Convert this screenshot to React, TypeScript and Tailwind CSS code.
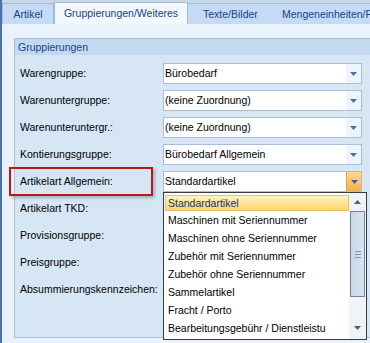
import React from "react";

const font = { fontFamily: '"Liberation Sans", Arial, sans-serif' };

function Arrow({ color = "#4d6fa8" }: { color?: string }) {
  return (
    <svg width="7" height="4" viewBox="0 0 7 4">
      <polygon points="0,0 7,0 3.5,4" fill={color} />
    </svg>
  );
}

function Combo({ value, open }: { value: string; open?: boolean }) {
  return (
    <div className="flex h-[21px] w-[199px] items-stretch border border-[#a7bfd8] bg-white">
      <div className="flex flex-1 items-center pl-[1px] text-black">{value}</div>
      {open ? (
        <div className="flex w-[15px] items-center justify-center border-l border-[#e3a54b] bg-gradient-to-b from-[#ffd98a] to-[#f6b04a]">
          <Arrow color="#3c5fa0" />
        </div>
      ) : (
        <div className="flex w-[15px] items-center justify-center bg-[#edf4fc]">
          <Arrow />
        </div>
      )}
    </div>
  );
}

const rows: { label: string; value?: string; open?: boolean }[] = [
  { label: "Warengruppe:", value: "Bürobedarf" },
  { label: "Warenuntergruppe:", value: "(keine Zuordnung)" },
  { label: "Warenunteruntergr.:", value: "(keine Zuordnung)" },
  { label: "Kontierungsgruppe:", value: "Bürobedarf Allgemein" },
  { label: "Artikelart Allgemein:", value: "Standardartikel", open: true },
  { label: "Artikelart TKD:", value: "" },
  { label: "Provisionsgruppe:", value: "" },
  { label: "Preisgruppe:", value: "" },
  { label: "Absummierungskennzeichen:", value: "" },
];

const items = [
  "Maschinen mit Seriennummer",
  "Maschinen ohne Seriennummer",
  "Zubehör mit Seriennummer",
  "Zubehör ohne Seriennummer",
  "Sammelartikel",
  "Fracht / Porto",
  "Bearbeitungsgebühr / Dienstleistu",
];

export default function App() {
  return (
    <div
      style={font}
      className="relative h-[343px] w-[370px] overflow-hidden border-l-2 border-[#4b72a8] bg-[#eaf2fc] text-[10.5px] leading-none"
    >
      {/* Tab strip */}
      <div className="flex h-[24px] items-end border-t-[3px] border-[#c9d6e6] bg-[#d9e6f5] text-[10.5px] text-[#15428b]">
        <div className="flex h-[21px] w-[52px] items-center justify-center border border-b-0 border-[#9fbbdc] bg-[#c5dbf5]">
          Artikel
        </div>
        <div className="flex h-[22px] w-[134px] items-center justify-center border border-b-0 border-[#9fbbdc] bg-[#f3f8fe]">
          Gruppierungen/Weiteres
        </div>
        <div className="flex h-[21px] flex-1 items-center overflow-hidden border-t border-[#9fbbdc] bg-[#c5dbf5] pl-[15px]">
          <span className="w-[79px] shrink-0">Texte/Bilder</span>
          <span className="whitespace-nowrap">Mengeneinheiten/Preise</span>
        </div>
      </div>

      {/* Content */}
      <div className="pl-[12px] pt-[14px]">
        <div className="h-[300px] w-[360px] border border-[#a9c0da] bg-[#d6e6f5]">
          <div className="flex h-[16px] items-center bg-[#c3d9f0] pl-[3px] text-[#15428b]">
            Gruppierungen
          </div>
          <div className="flex flex-col gap-[6px] pl-[5px] pt-[8px]">
            {rows.map((r) => (
              <div key={r.label} className="flex h-[21px] items-center">
                <div className="w-[143px] text-black">{r.label}</div>
                {r.value ? <Combo value={r.value} open={r.open} /> : null}
              </div>
            ))}
          </div>
        </div>
      </div>

      {/* Red highlight box */}
      <div className="absolute left-[7px] top-[167px] h-[29px] w-[144px] border-2 border-[#c0141b] shadow-[2px_2px_3px_rgba(60,80,110,0.35)]" />

      {/* Dropdown list */}
      <div className="absolute left-[161px] top-[192px] flex h-[148px] w-[204px] border border-[#3b3b3b] bg-white">
        <div className="flex flex-1 flex-col pl-[1px] pt-[2px]">
          <div className="flex h-[16px] items-center border border-[#e7c26a] bg-gradient-to-b from-[#fff3c8] to-[#ffd45e] pl-[2px] text-[#10306a]">
            Standardartikel
          </div>
          {items.map((t) => (
            <div key={t} className="flex h-[18px] items-center pl-[3px] text-black">
              {t}
            </div>
          ))}
        </div>
        <div className="flex w-[17px] flex-col items-center bg-[#f0f3f8]">
          <div className="flex h-[18px] items-center justify-center">
            <svg width="7" height="4" viewBox="0 0 7 4">
              <polygon points="0,4 7,4 3.5,0" fill="#4d5f7a" />
            </svg>
          </div>
          <div className="flex h-[86px] w-[15px] flex-col items-center justify-center gap-[2px] border border-[#6f84a8] bg-gradient-to-r from-[#c9d6e8] to-[#dbe5f1]">
            <div className="h-px w-[6px] bg-[#8293b0]" />
            <div className="h-px w-[6px] bg-[#8293b0]" />
            <div className="h-px w-[6px] bg-[#8293b0]" />
          </div>
          <div className="flex-1" />
          <div className="flex h-[22px] items-center justify-center">
            <Arrow color="#4d5f7a" />
          </div>
        </div>
      </div>
    </div>
  );
}
